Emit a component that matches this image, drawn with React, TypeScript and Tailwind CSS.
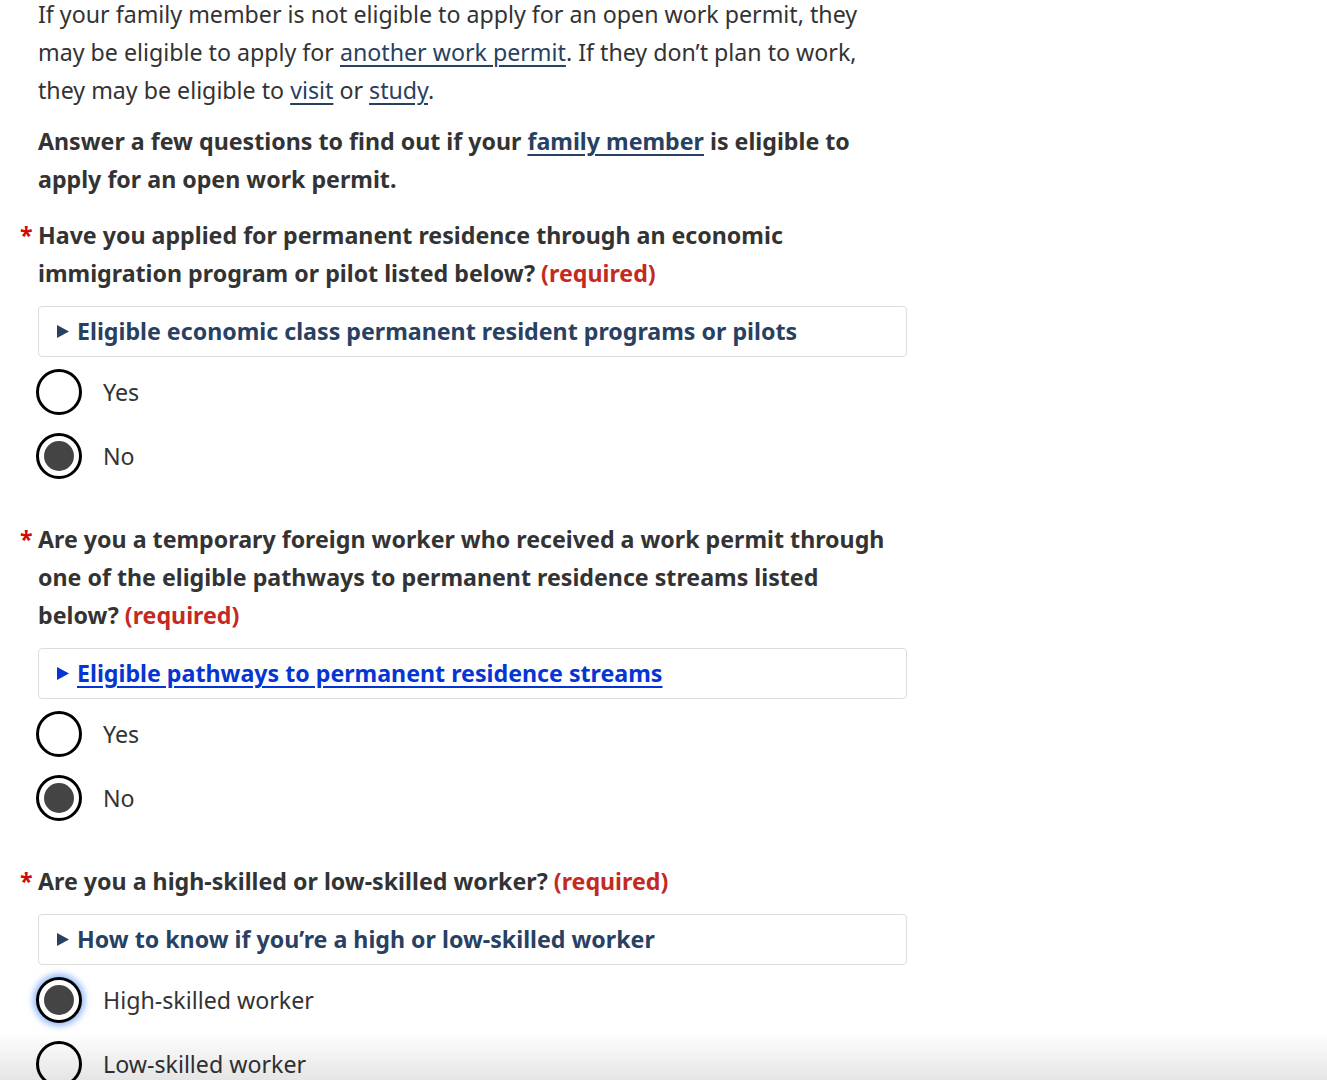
import React from 'react'

const font = { fontFamily: '"Noto Sans", "Open Sans", sans-serif' }

function Radio({ label, checked, focused }: { label: string; checked?: boolean; focused?: boolean }) {
  return (
    <div className="flex items-center h-[64px] -ml-[2px]">
      <span
        className={`flex items-center justify-center w-[46px] h-[46px] rounded-full border-[3px] border-black bg-white ${
          focused ? 'shadow-[0_0_6px_3px_rgba(59,130,246,0.55)]' : ''
        }`}
      >
        {checked && <span className="w-[30px] h-[30px] rounded-full bg-[#444]" />}
      </span>
      <span className="ml-[21px] text-[23.2px] leading-[38px] text-[#333]">{label}</span>
    </div>
  )
}

function Summary({ text, link }: { text: string; link?: boolean }) {
  const color = link ? 'text-[#0535d2]' : 'text-[#284162]'
  return (
    <div className="mt-[14px] mb-[3px] h-[51px] w-[869px] border border-[#ddd] rounded-[4px] flex items-center pl-[18px]">
      <svg width="12" height="13" viewBox="0 0 12 13" className={`${color} shrink-0`}>
        <path d="M0 0 L12 6.5 L0 13 Z" fill="currentColor" />
      </svg>
      <span className={`ml-[8px] text-[23.2px] font-bold ${color} ${link ? 'underline underline-offset-[4px]' : ''}`}>
        {text}
      </span>
    </div>
  )
}

function Question({ children }: { children: React.ReactNode }) {
  return (
    <div className="flex -ml-[18px] w-[878px]">
      <span className="w-[18px] shrink-0 text-[23.2px] leading-[38px] font-bold text-[#d3080c]">*</span>
      <span className="text-[23.2px] leading-[38px] font-bold text-[#333]">{children}</span>
    </div>
  )
}

function Req() {
  return <span className="text-[#c42a22]"> (required)</span>
}

export default function App() {
  return (
    <div className="min-h-screen bg-white relative overflow-hidden" style={font}>
      <div className="pl-[38px] -mt-[5px]">
        <p className="w-[860px] text-[23.2px] leading-[38px] text-[#333]">
          If your family member is not eligible to apply for an open work permit, they may be eligible to apply for{' '}
          <a className="text-[#284162] underline underline-offset-[4px]">another work permit</a>. If they don’t plan
          to work, they may be eligible to <a className="text-[#284162] underline underline-offset-[4px]">visit</a> or{' '}
          <a className="text-[#284162] underline underline-offset-[4px]">study</a>.
        </p>
        <p className="mt-[13px] w-[860px] text-[23.2px] leading-[38px] font-bold text-[#333]">
          Answer a few questions to find out if your{' '}
          <a className="text-[#284162] underline underline-offset-[4px]">family member</a> is eligible to apply for an
          open work permit.
        </p>

        <div className="mt-[18px]">
          <Question>
            Have you applied for permanent residence through an economic immigration program or pilot listed below?
            <Req />
          </Question>
          <Summary text="Eligible economic class permanent resident programs or pilots" />
          <Radio label="Yes" />
          <Radio label="No" checked />
        </div>

        <div className="mt-[32px]">
          <Question>
            Are you a temporary foreign worker who received a work permit through one of the eligible pathways to
            permanent residence streams listed below?
            <Req />
          </Question>
          <Summary text="Eligible pathways to permanent residence streams" link />
          <Radio label="Yes" />
          <Radio label="No" checked />
        </div>

        <div className="mt-[32px]">
          <Question>
            Are you a high-skilled or low-skilled worker?
            <Req />
          </Question>
          <Summary text="How to know if you’re a high or low-skilled worker" />
          <Radio label="High-skilled worker" checked focused />
          <Radio label="Low-skilled worker" />
        </div>
      </div>
      <div className="fixed left-0 right-0 bottom-0 h-[48px] pointer-events-none bg-gradient-to-b from-transparent to-[rgba(0,0,0,0.1)]" />
    </div>
  )
}
